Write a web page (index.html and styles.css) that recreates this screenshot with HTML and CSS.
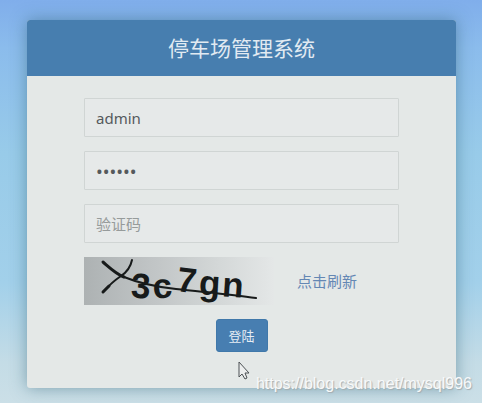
FILE: index.html
```html
<!DOCTYPE html>
<html lang="zh-CN">
<head>
<meta charset="utf-8">
<meta name="viewport" content="width=device-width, initial-scale=1">
<title>停车场管理系统</title>
<link rel="stylesheet" href="styles.css">
</head>
<body>
<main class="card">
  <header class="card-header">
    <h1 class="title">停车场管理系统</h1>
  </header>
  <form class="form">
    <input class="field" type="text" value="admin" aria-label="用户名">
    <input class="field password" type="password" value="123456" aria-label="密码">
    <input class="field" type="text" placeholder="验证码" aria-label="验证码">
    <div class="captcha-row">
      <svg class="captcha" viewBox="0 0 190 48" role="img" aria-label="3c7gn">
        <defs>
          <linearGradient id="shade">
            <stop offset="0" stop-color="#adb2b3"/>
            <stop offset=".35" stop-color="#c0c4c5"/>
            <stop offset=".7" stop-color="#d3d7d7"/>
            <stop offset="1" stop-color="#e4e7e7"/>
          </linearGradient>
        </defs>
        <rect width="190" height="48" fill="url(#shade)"/>
        <g class="captcha-text">
          <text x="47" y="41" transform="rotate(3 56 30)">3</text>
          <text x="69" y="41" transform="rotate(-6 78 34)">c</text>
          <text x="93" y="35" transform="rotate(7 101 24)">7</text>
          <text x="115" y="38" transform="rotate(3 125 30)">g</text>
          <text x="138" y="40" transform="rotate(4 148 32)">n</text>
        </g>
        <g fill="none" stroke="#171a1a" stroke-linecap="round" stroke-linejoin="round">
          <path d="M19 5C26 11 32 17 40 20" stroke-width="3"/>
          <path d="M40 20C57 27 73 30 92 32C118 35 145 37 172 41" stroke-width="2"/>
          <path d="M48 3Q46 13 37 19Q28 25 19 35" stroke-width="2"/>
          <path d="M25 29L19 35" stroke-width="3"/>
        </g>
      </svg>
      <a class="refresh" href="#">点击刷新</a>
    </div>
    <button class="submit" type="button">登陆</button>
  </form>
</main>
<svg class="cursor" viewBox="0 0 12 19" aria-hidden="true">
  <path d="M1 1V16L4 13L7 18L9 17L7 12H11Z" fill="#eceeee" stroke="#4c5154" stroke-linejoin="round"/>
</svg>
<div class="watermark">https://blog.csdn.net/mysql996</div>
</body>
</html>
```

FILE: styles.css
```css
* {
  box-sizing: border-box;
}

body {
  margin: 0;
  min-height: 100vh;
  padding: 20px 26px 15px 27px;
  font-family: "Noto Sans", "Noto Sans CJK SC", sans-serif;
  background: linear-gradient(#80aeeb 0, #8bbcec 12%, #98cbe9 38%, #a2d0ea 70%, #c4dce6 90%, #cbdfe7 100%);
}

.card {
  border-radius: 3px;
  background: #e4e8e7;
  box-shadow: 0 0 16px rgba(45, 95, 115, .5);
}

.card-header {
  padding: 14px;
  border-radius: 3px 3px 0 0;
  background: #477eaf;
  text-align: center;
}

.title {
  margin: 0;
  color: #e1eaf2;
  font-size: 21px;
  font-weight: 400;
  line-height: 28px;
}

.form {
  display: flex;
  flex-direction: column;
  gap: 14px;
  padding: 22px 57px 36px;
}

.field {
  width: 100%;
  height: 39px;
  padding: 0 11px;
  border: 1px solid #d0d5d4;
  border-radius: 1px;
  background: #e6e9e9;
  color: #55595c;
  font: inherit;
  font-size: 15px;
  outline: 0;
}

.password {
  font-size: 18px;
}

.field::placeholder {
  color: #969b9b;
  opacity: 1;
}

.captcha-row {
  display: flex;
  align-items: center;
  gap: 23px;
}

.captcha {
  display: block;
  width: 190px;
  height: 48px;
}

.captcha-text {
  fill: #171a1a;
  font-family: "Liberation Sans", sans-serif;
  font-size: 35px;
  font-weight: 700;
}

.refresh {
  color: #6487b4;
  font-family: "Noto Sans CJK SC", sans-serif;
  font-size: 15px;
  line-height: 20px;
  text-decoration: none;
}

.submit {
  align-self: center;
  width: 52px;
  height: 33px;
  padding: 0;
  border: 1px solid #4078aa;
  border-radius: 3px;
  background: #477eb1;
  color: #e6edf4;
  font-family: "Noto Sans CJK SC", sans-serif;
  font-size: 13px;
}

.cursor {
  position: absolute;
  top: 361px;
  left: 238px;
  width: 12px;
  height: 19px;
}

.watermark {
  position: absolute;
  right: 10px;
  bottom: 9px;
  color: #f7f9fa;
  font-family: "Liberation Sans", sans-serif;
  font-size: 16px;
  line-height: 20px;
  text-shadow: 1px 1px 1px #a5adb0;
}
```
